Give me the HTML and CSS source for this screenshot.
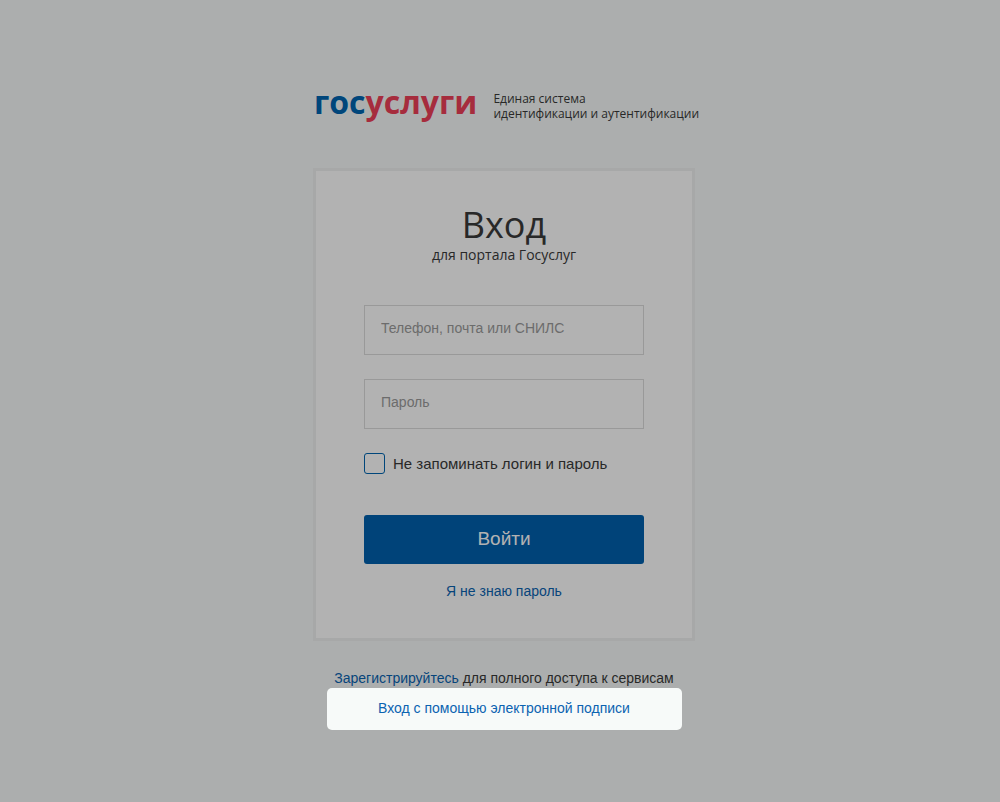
FILE: index.html
```html
<!DOCTYPE html>
<html lang="ru">
<head>
  <meta charset="UTF-8">
  <meta name="viewport" content="width=device-width, initial-scale=1">
  <title>Вход — Госуслуги</title>
  <link rel="stylesheet" href="styles.css">
</head>
<body>

  <main class="page">
    <header class="header">
      <a class="logo" href="#"><span class="logo-blue">гос</span><span class="logo-red">услуги</span></a>
      <p class="slogan">Единая система<br>идентификации и аутентификации</p>
    </header>

    <form class="card">
      <h1 class="title">Вход</h1>
      <p class="subtitle">для портала Госуслуг</p>

      <input class="field" type="text" name="login" placeholder="Телефон, почта или СНИЛС" aria-label="Телефон, почта или СНИЛС">
      <input class="field" type="password" name="password" placeholder="Пароль" aria-label="Пароль">

      <label class="remember">
        <input class="checkbox" type="checkbox" name="foreign">
        <span>Не запоминать логин и пароль</span>
      </label>

      <button class="submit" type="submit">Войти</button>
      <a class="link forgot" href="#">Я не знаю пароль</a>
    </form>

    <p class="register"><a class="link" href="#">Зарегистрируйтесь</a> для полного доступа к сервисам</p>

    <div class="spotlight">
      <a class="link" href="#">Вход с помощью электронной подписи</a>
    </div>
  </main>

</body>
</html>
```

FILE: styles.css
```css
* {
  box-sizing: border-box;
}
body {
  min-height: 100vh;
  margin: 0;
  padding: 88px 0 0 8px;
  background-color: #f7faf9;
  color: #3a3a3a;
  font-family: "Liberation Sans", Arial, sans-serif;
  font-size: 14px;
  line-height: 20px;
}
h1, p {
  margin: 0;
  font-weight: normal;
}
.page {
  max-width: 382px;
  margin: 0 auto;
  display: flex;
  flex-direction: column;
}
.header {
  display: flex;
  align-items: flex-end;
  gap: 16px;
  height: 33px;
  margin-bottom: 47px;
  padding-left: 1px;
}
.logo {
  font-family: "Open Sans", sans-serif;
  font-size: 32px;
  font-weight: bold;
  line-height: 38px;
  text-decoration: none;
}
.logo-blue {
  color: #0065b1;
}
.logo-red {
  color: #ee3f58;
}
.slogan {
  font-family: "Open Sans", sans-serif;
  font-size: 12px;
  line-height: 15px;
  white-space: nowrap;
}
.card {
  display: flex;
  flex-direction: column;
  padding: 32px 48px 37px;
  border: 3px solid #f0f1f1;
  background-color: white;
}
.title {
  font-family: "Open Sans", sans-serif;
  font-size: 36px;
  line-height: 44px;
  text-align: center;
}
.subtitle {
  margin-bottom: 42px;
  font-family: "Open Sans", sans-serif;
  font-size: 14px;
  line-height: 16px;
  text-align: center;
}
.field {
  width: 100%;
  height: 50px;
  margin-bottom: 24px;
  padding: 0 16px 4px;
  border: 1px solid #dcdcdc;
  background-color: white;
  color: #3a3a3a;
  font: inherit;
}
.field::placeholder {
  color: #9b9b9b;
  opacity: 1;
}
.remember {
  display: flex;
  align-items: center;
  gap: 8px;
  margin-bottom: 41px;
  font-size: 15px;
}
.checkbox {
  appearance: none;
  width: 21px;
  height: 21px;
  margin: 0;
  border: 1px solid #0065b1;
  border-radius: 3px;
  background-color: white;
}
.submit {
  height: 49px;
  margin-bottom: 17px;
  padding: 0 0 2px;
  border: none;
  border-radius: 3px;
  background-color: #0060ae;
  color: white;
  font-family: inherit;
  font-size: 19px;
  cursor: pointer;
}
.link {
  color: #0b63b1;
  text-decoration: none;
}
.forgot {
  align-self: center;
}
.register {
  margin-top: 27px;
  text-align: center;
}

/* highlighted row, the shadow dims everything around it */
.spotlight {
  position: relative;
  width: 355px;
  height: 42px;
  align-self: center;
  padding-top: 10px;
  border-radius: 5px;
  box-shadow: 0 0 0 9999px rgba(0, 0, 0, 0.3);
  text-align: center;
}
```
